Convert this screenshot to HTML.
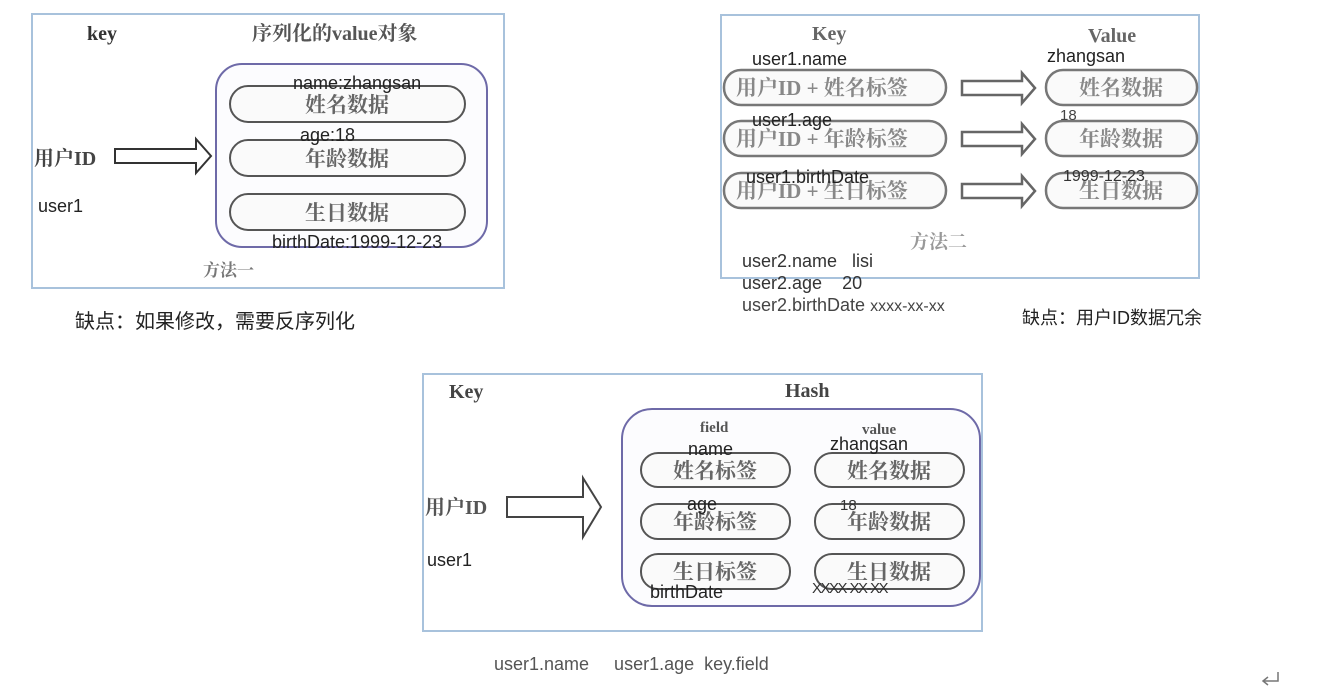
<!DOCTYPE html>
<html><head><meta charset="utf-8"><style>
html,body{margin:0;padding:0;background:#fff;width:1330px;height:695px;overflow:hidden}
svg{display:block}
.sf{font-family:"Liberation Serif","Noto Serif CJK SC",serif}
.ss{font-family:"Liberation Sans","Noto Sans CJK SC",sans-serif}
text{white-space:pre}
</style></head><body>
<svg width="1330" height="695" viewBox="0 0 1330 695" xmlns="http://www.w3.org/2000/svg">
<!-- Diagram 1 -->
<rect x="32" y="14" width="472" height="274" fill="#fff" stroke="#a8c2dc" stroke-width="2"/>
<text x="87" y="40" class="sf" font-size="20" font-weight="bold" fill="#333">key</text>
<text x="252" y="40" class="sf" font-size="20" font-weight="bold" fill="#555">序列化的value对象</text>
<rect x="216" y="64" width="271" height="183" rx="26" fill="#fcfcfe" stroke="#6e6aa8" stroke-width="2"/>
<g fill="#fafafa" stroke="#555" stroke-width="2">
<rect x="230" y="86" width="235" height="36" rx="18"/>
<rect x="230" y="140" width="235" height="36" rx="18"/>
<rect x="230" y="194" width="235" height="36" rx="18"/>
</g>
<g class="sf" font-size="21" font-weight="bold" fill="#666" text-anchor="middle">
<text x="347" y="112">姓名数据</text>
<text x="347" y="166">年龄数据</text>
<text x="347" y="220">生日数据</text>
</g>
<text x="34" y="165" class="sf" font-size="20" font-weight="bold" fill="#444">用户ID</text>
<path d="M115 149 H196 V139 L211 156 L196 173 V163 H115 Z" fill="#fff" stroke="#333" stroke-width="2"/>
<text x="38" y="212" class="ss" font-size="18" fill="#222">user1</text>
<g class="ss" font-size="18" fill="#222">
<text x="293" y="89">name:zhangsan</text>
<text x="300" y="141">age:18</text>
<text x="272" y="248">birthDate:1999-12-23</text>
</g>
<text x="203" y="276" class="sf" font-size="17" font-weight="bold" fill="#777">方法一</text>
<text x="75" y="328" class="ss" font-size="20" fill="#222">缺点：如果修改，需要反序列化</text>

<!-- Diagram 2 -->
<rect x="721" y="15" width="478" height="263" fill="#fff" stroke="#a8c2dc" stroke-width="2"/>
<text x="812" y="40" class="sf" font-size="20" font-weight="bold" fill="#666">Key</text>
<text x="1088" y="42" class="sf" font-size="20" font-weight="bold" fill="#666">Value</text>
<g fill="#fafafa" stroke="#777" stroke-width="2.5">
<rect x="724" y="70" width="222" height="35" rx="17"/>
<rect x="724" y="121" width="222" height="35" rx="17"/>
<rect x="724" y="173" width="222" height="35" rx="17"/>
<rect x="1046" y="70" width="151" height="35" rx="17"/>
<rect x="1046" y="121" width="151" height="35" rx="17"/>
<rect x="1046" y="173" width="151" height="35" rx="17"/>
</g>
<g fill="#fff" stroke="#666" stroke-width="2.5">
<path d="M962 81 H1022 V73 L1035 88 L1022 103 V95 H962 Z"/>
<path d="M962 132 H1022 V124 L1035 139 L1022 154 V146 H962 Z"/>
<path d="M962 184 H1022 V176 L1035 191 L1022 206 V198 H962 Z"/>
</g>
<g class="sf" font-size="21" font-weight="bold" fill="#888">
<text x="736" y="95">用户ID + 姓名标签</text>
<text x="736" y="146">用户ID + 年龄标签</text>
<text x="736" y="198">用户ID + 生日标签</text>
</g>
<g class="sf" font-size="21" font-weight="bold" fill="#888" text-anchor="middle">
<text x="1121" y="95">姓名数据</text>
<text x="1121" y="146">年龄数据</text>
<text x="1121" y="198">生日数据</text>
</g>
<g class="ss" font-size="18" fill="#222">
<text x="752" y="65">user1.name</text>
<text x="1047" y="62">zhangsan</text>
<text x="752" y="126">user1.age</text>
<text x="746" y="183">user1.birthDate</text>
</g>
<text x="1060" y="120" class="ss" font-size="15" fill="#444">18</text>
<text x="1063" y="181" class="ss" font-size="16" fill="#333">1999-12-23</text>
<text x="910" y="248" class="sf" font-size="19" font-weight="bold" fill="#999">方法二</text>
<g class="ss" font-size="18" fill="#333">
<text x="742" y="267">user2.name   lisi</text>
<text x="742" y="289">user2.age    20</text>
<text x="742" y="311" fill="#444">user2.birthDate <tspan font-size="16">xxxx-xx-xx</tspan></text>
</g>
<text x="1022" y="324" class="ss" font-size="18" fill="#222">缺点：用户ID数据冗余</text>

<!-- Diagram 3 -->
<rect x="423" y="374" width="559" height="257" fill="#fff" stroke="#a8c2dc" stroke-width="2"/>
<text x="449" y="398" class="sf" font-size="20" font-weight="bold" fill="#444">Key</text>
<text x="785" y="397" class="sf" font-size="20" font-weight="bold" fill="#444">Hash</text>
<rect x="622" y="409" width="358" height="197" rx="30" fill="#fcfcfe" stroke="#6e6aa8" stroke-width="2"/>
<text x="700" y="432" class="sf" font-size="15" font-weight="bold" fill="#555">field</text>
<text x="862" y="434" class="sf" font-size="15" font-weight="bold" fill="#555">value</text>
<g fill="#fafafa" stroke="#555" stroke-width="2">
<rect x="641" y="453" width="149" height="34" rx="17"/>
<rect x="641" y="504" width="149" height="35" rx="17"/>
<rect x="641" y="554" width="149" height="35" rx="17"/>
<rect x="815" y="453" width="149" height="34" rx="17"/>
<rect x="815" y="504" width="149" height="35" rx="17"/>
<rect x="815" y="554" width="149" height="35" rx="17"/>
</g>
<g class="sf" font-size="21" font-weight="bold" fill="#666" text-anchor="middle">
<text x="715" y="478">姓名标签</text>
<text x="715" y="529">年龄标签</text>
<text x="715" y="579">生日标签</text>
<text x="889" y="478">姓名数据</text>
<text x="889" y="529">年龄数据</text>
<text x="889" y="579">生日数据</text>
</g>
<text x="425" y="514" class="sf" font-size="20" font-weight="bold" fill="#555">用户ID</text>
<path d="M507 497 H583 V478 L601 507 L583 537 V517 H507 Z" fill="#fff" stroke="#444" stroke-width="2"/>
<text x="427" y="566" class="ss" font-size="18" fill="#222">user1</text>
<g class="ss" font-size="18" fill="#222">
<text x="688" y="455">name</text>
<text x="830" y="450">zhangsan</text>
<text x="687" y="510">age</text>
<text x="650" y="598">birthDate</text>
</g>
<text x="840" y="510" class="ss" font-size="15" fill="#333">18</text>
<text x="812" y="593" class="ss" font-size="15" fill="#333" letter-spacing="-1.5">XXXX-XX-XX</text>
<text x="494" y="670" class="ss" font-size="18" fill="#555">user1.name     user1.age  key.field</text>

<path d="M1278 672 V681 H1264 M1268 677 L1263 681 L1268 685" fill="none" stroke="#777" stroke-width="1.5"/>
</svg>
</body></html>
